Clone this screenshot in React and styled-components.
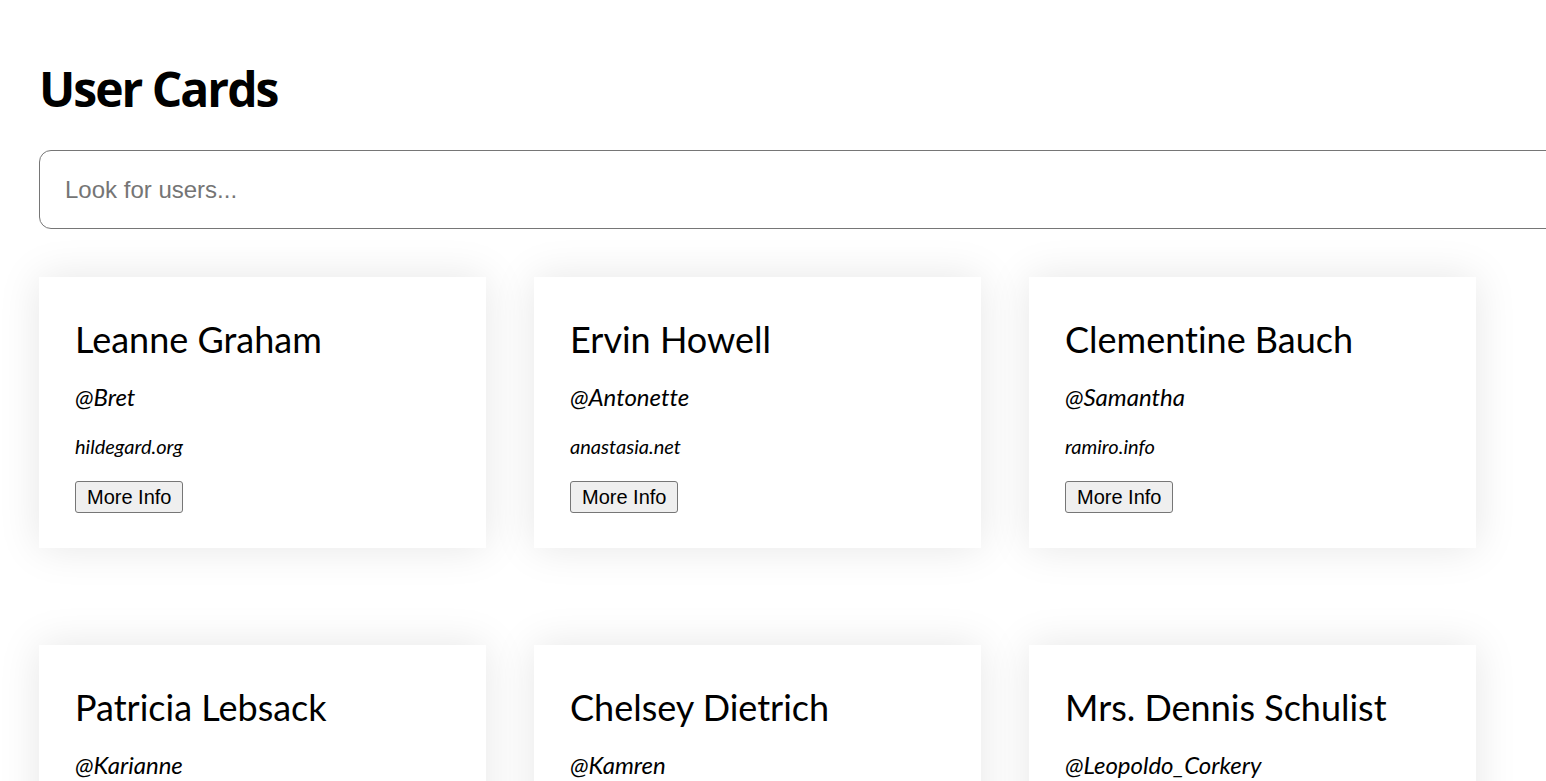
import React, { useState } from 'react';
import styled, { createGlobalStyle } from 'styled-components';

const users = [
    { id: 1, name: 'Leanne Graham', username: 'Bret', website: 'hildegard.org' },
    { id: 2, name: 'Ervin Howell', username: 'Antonette', website: 'anastasia.net' },
    { id: 3, name: 'Clementine Bauch', username: 'Samantha', website: 'ramiro.info' },
    { id: 4, name: 'Patricia Lebsack', username: 'Karianne', website: 'kale.biz' },
    { id: 5, name: 'Chelsey Dietrich', username: 'Kamren', website: 'demarco.info' },
    { id: 6, name: 'Mrs. Dennis Schulist', username: 'Leopoldo_Corkery', website: 'ola.org' },
    { id: 7, name: 'Kurtis Weissnat', username: 'Elwyn.Skiles', website: 'elvis.io' },
    { id: 8, name: 'Nicholas Runolfsdottir V', username: 'Maxime_Nienow', website: 'jacynthe.com' },
    { id: 9, name: 'Glenna Reichert', username: 'Delphine', website: 'conrad.com' },
    { id: 10, name: 'Clementina DuBuque', username: 'Moriah.Stanton', website: 'ambrose.net' },
];

const App = () => {
    const [query, setQuery] = useState('');
    const shown = users.filter(u => u.name.toLowerCase().includes(query.toLowerCase()));

    return (
        <>
        <GlobalStyle />
        <Page>
            <Title>User Cards</Title>
            <Search
                type="text"
                placeholder="Look for users..."
                value={query}
                onChange={e => setQuery(e.target.value)}
            />
            <CardGrid>
                {shown.map(user => <UserCard key={user.id} user={user} />)}
            </CardGrid>
        </Page>
        </>
    );
};

export default App;

const UserCard = ({ user }) => {
    return (
        <Card>
            <Name>{user.name}</Name>
            <Handle>@{user.username}</Handle>
            <Website>{user.website}</Website>
            <InfoButton>More Info</InfoButton>
        </Card>
    );
};

const GlobalStyle = createGlobalStyle`
    body {
        margin: 0;
        background: #ffffff;
        font-family: Lato, "Open Sans", sans-serif;
        font-variant-ligatures: no-common-ligatures;
        color: #000000;
    }
`;

const Page = styled.div`
    padding: 0 39px 60px 39px;
`;

const Title = styled.h1`
    font-family: "Open Sans", sans-serif;
    font-size: 48px;
    font-weight: 700;
    letter-spacing: -2px;
    line-height: 60px;
    margin: 0;
    padding-top: 59px;
`;

const Search = styled.input`
    display: block;
    box-sizing: content-box;
    width: 100%;
    height: 77px;
    padding: 0 25px;
    margin: 31px 0 48px 0;
    border: 1px solid #767676;
    border-radius: 12px;
    font-family: "Liberation Sans", Arial, sans-serif;
    font-size: 24px;
    color: #000000;
    outline: none;

    ::placeholder {
        color: #757575;
    }
`;

const CardGrid = styled.div`
    display: grid;
    grid-template-columns: repeat(3, 447px);
    column-gap: 48px;
    row-gap: 97px;
`;

const Card = styled.div`
    display: flex;
    flex-direction: column;
    align-items: flex-start;
    background: #ffffff;
    padding: 40px 36px 35px 36px;
    box-shadow: 0 0 40px rgba(0, 0, 0, 0.1);
`;

const Name = styled.h2`
    margin: 0;
    font-family: Lato, sans-serif;
    font-size: 36px;
    font-weight: 400;
    line-height: 44px;
`;

const Handle = styled.p`
    margin: 21px 0 0 0;
    font-size: 24px;
    font-style: italic;
    line-height: 30px;
`;

const Website = styled.p`
    margin: 21px 0 0 0;
    font-size: 20px;
    font-style: italic;
    line-height: 26px;
`;

const InfoButton = styled.button`
    margin-top: 22px;
    height: 32px;
    padding: 0 11px;
    font-family: "Liberation Sans", Arial, sans-serif;
    font-size: 20px;
    color: #000000;
    background: #efefef;
    border: 1px solid #767676;
    border-radius: 3px;
    cursor: pointer;
`;
